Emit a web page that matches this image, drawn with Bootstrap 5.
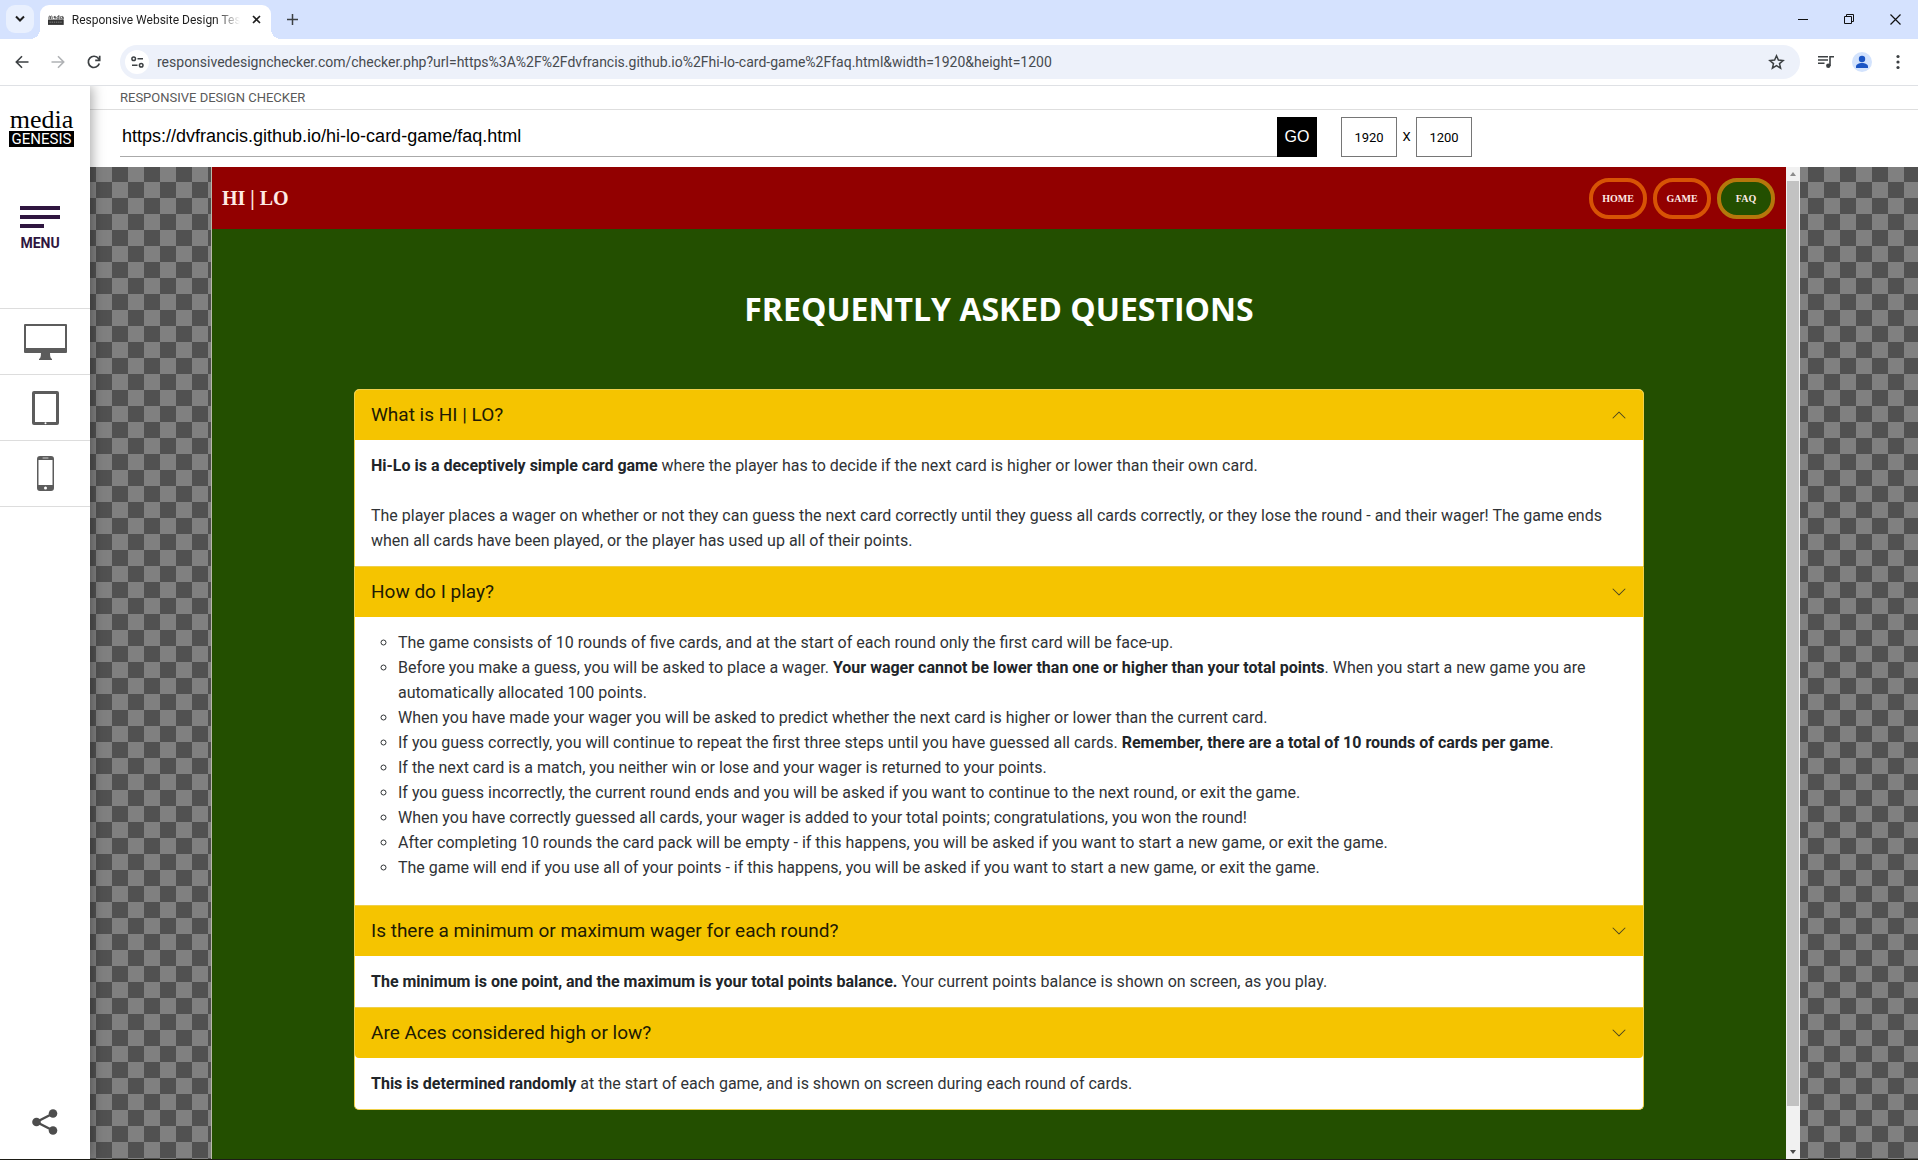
<!DOCTYPE html>
<html lang="en">
<head>
<meta charset="utf-8">
<meta name="viewport" content="width=device-width, initial-scale=1">
<title>Responsive Website Design Tester</title>
<link href="https://cdn.jsdelivr.net/npm/bootstrap@5.3.0/dist/css/bootstrap.min.css" rel="stylesheet">
<style>
body{font-family:Roboto,"Liberation Sans",sans-serif;font-size:16px;background:#fff;color:#212529}
button{font-family:inherit}
svg{display:block}
.shell{min-height:100vh;border-bottom:1px solid #1d1d16}
.ico{border:0;background:none;padding:0;color:#3c4043;display:flex;align-items:center;justify-content:center}

/* browser tab strip */
.strip{height:39px;background:#d5e2fe;padding:5px 0 0 6px}
.tabs-drop{width:28px;height:28px;border-radius:9px;background:#e9f0fe;color:#1f1f1f}
.page-tab{position:relative;width:231px;height:34px;margin-left:6px;padding:0 10px 5px 8px;background:#fff;border-radius:9px 9px 0 0;font-size:12px;color:#1f1f1f}
.page-tab::before,.page-tab::after{content:"";position:absolute;bottom:0;width:10px;height:10px}
.page-tab::before{left:-10px;background:radial-gradient(circle at 0 0,transparent 10px,#fff 10px)}
.page-tab::after{right:-10px;background:radial-gradient(circle at 100% 0,transparent 10px,#fff 10px)}
.tab-name{white-space:nowrap;overflow:hidden;-webkit-mask-image:linear-gradient(90deg,#000 145px,transparent 168px);mask-image:linear-gradient(90deg,#000 145px,transparent 168px)}
.win-btn{width:46px;height:28px;color:#111}

/* address bar */
.tools{height:47px;padding:0 2px 0 4px;border-bottom:1px solid #dfe1e5}
.nav-ico{width:36px;height:36px}
.omni{height:34px;margin-left:8px;padding:0 15px 0 5px;background:#edf1fa;border-radius:17px}
.site-info{width:24px;height:24px;border-radius:50%;background:#fff}
.omni input{border:0;background:none;outline:0;padding:0;margin-left:8px;font-size:14px;color:#474b50}

/* left rail */
.rail{position:relative;z-index:2;width:90px;background:#fff;box-shadow:2px 0 12px rgba(0,0,0,.35);clip-path:inset(0 -20px 0 0)}
.brand{width:65px;margin:22px 0 0 9px;color:#000;text-decoration:none;text-align:center}
.brand-top{display:block;font:26px/23px "Liberation Serif",serif}
.brand-low{display:block;background:#000;color:#fff;font-size:15px;line-height:16px}
.menu-btn{border:0;background:none;padding:0;margin:59px 0 0 20px;width:40px;color:#2f1640;font-weight:700;font-size:14px;line-height:16px}
.menu-btn span{display:block;margin-top:7px}
.devices{margin-top:57px}
.devices a{height:66px;border-top:1px solid #ddd;color:#5c5c5c;padding-left:1px}
.devices a:last-child{height:67px;border-bottom:1px solid #ddd}

/* checker form */
.site-name{height:24px;padding-left:30px;border-bottom:1px solid #dedede;font-size:13px;color:#5a5a5a}
.url-row{height:57px;padding:7px 0 10px 30px}
.url-box{flex:0 1 1157px;border:0;border-bottom:1px solid #aaa;padding:0 2px;font:18px "Liberation Sans",Arial,sans-serif;color:#000;outline:0;min-width:0}
.go{width:40px;border:0;background:#000;color:#fff;font:16px "Liberation Sans",Arial,sans-serif;padding:0}
.dim{width:56px;border:1px solid #767676;text-align:center;font-size:13px;color:#000;padding:0}
.times{width:19px;text-align:center;font-size:13px;color:#000}
.url-row .tall{height:40px}

/* preview */
.stage{padding:0 118px 0 121px;background:conic-gradient(#808080 25%,#515151 0 50%,#808080 0 75%,#515151 0) 6px 15px/32px 32px}
.frame{min-width:0;background:#234f00;border-left:1px solid #b9b9a9}
.game-nav{height:62px;background:#920000;padding:0 11px 0 10px}
.game-brand{font:700 20px "Liberation Serif",serif;color:#ffe9e4;text-decoration:none}
.pills{gap:6px}
.pill-link{width:58px;height:41px;border:4px solid #d75305;border-radius:20px;font:700 10px "Liberation Serif",serif;color:#ffe9e4;text-decoration:none}
.pill-link.on{background:#234f00;border-color:#b5770b}
.faq{padding:54px 142px 46px}
.faq h1{font:700 32px/52px "Open Sans","Noto Sans",sans-serif;color:#fff;margin:0 0 54px}
.accordion{--bs-accordion-border-color:#efd04a;--bs-accordion-border-radius:5px;--bs-accordion-inner-border-radius:4px;--bs-accordion-btn-padding-x:16px;--bs-accordion-btn-padding-y:0;--bs-accordion-body-padding-x:16px;--bs-accordion-body-padding-y:13px;--bs-accordion-btn-icon-width:16px;--bs-accordion-btn-bg:#f5c400;--bs-accordion-active-bg:#f5c400;--bs-accordion-btn-color:#211a04;--bs-accordion-active-color:#211a04;--bs-accordion-btn-active-icon:var(--bs-accordion-btn-icon)}
.accordion-button{height:50px;font-size:19px}
.accordion-button:not(.collapsed){box-shadow:none}
.accordion-button::after{opacity:.8}
.accordion-body{line-height:25px;color:#303336}
.accordion-body strong{color:#212529}
.accordion-body p{margin-bottom:25px}
.accordion-body p:last-child{margin:0}
.rules{list-style:circle;padding-left:27px;margin-bottom:12px}

.bar{width:14px;background:#f1f1f1;color:#8b8b8b}
.bar-thumb{flex:94 0 0;width:12px;background:#c2c2c2}
.bar-rest{flex:4 0 0}
.bar-end{height:14px;display:flex;align-items:center}
</style>
</head>
<body>
<div class="shell d-flex flex-column">

  <header>
    <div class="strip d-flex">
      <button class="ico tabs-drop" aria-label="Search tabs"><svg width="10" height="8" viewBox="0 0 10 8" fill="none" stroke="currentColor" stroke-width="2"><path d="M1 1.5l4 4 4-4"/></svg></button>
      <div class="page-tab d-flex align-items-center">
        <svg width="16" height="11" viewBox="0 0 16 11"><path d="M1 5V2.500q1-1 1.500 0V5m0-2.500q1.200-1 1.700 0V5M6 3.500h2Q7.500 1.500 6.200 2.500q-.7 1.500 1.600 2M11 1v4q-2 .4-2-1.200t2-1.300M12.500 2.200V5m1-2.500q2-.6 2 .6V5q-2 .2-1.800-.8t1.800-.6" fill="none" stroke="#555"/><path d="M0 5.500h16V11H0z" fill="#333"/><path d="M1.500 8.200h13" stroke="#888" stroke-dasharray="1.400 .8"/></svg>
        <span class="tab-name flex-grow-1 ms-2">Responsive Website Design Tester</span>
        <button class="ico" aria-label="Close tab"><svg width="9" height="9" viewBox="0 0 9 9" stroke="#1f1f1f" stroke-width="1.600"><path d="M1 1l7 7M8 1L1 8"/></svg></button>
      </div>
      <button class="ico ms-2 win-btn w-auto px-2" aria-label="New tab"><svg width="11" height="11" viewBox="0 0 11 11" stroke="#3c4043" stroke-width="1.500"><path d="M5.500 0v11M0 5.500h11"/></svg></button>
      <div class="d-flex ms-auto">
        <button class="ico win-btn" aria-label="Minimize"><svg width="10" height="10" viewBox="0 0 10 10" stroke="currentColor"><path d="M0 5.500h10"/></svg></button>
        <button class="ico win-btn" aria-label="Restore"><svg width="10" height="10" viewBox="0 0 10 10" fill="none" stroke="currentColor"><path d="M.5 2.500h7v7h-7zM2.500 2.500v-2h7v7h-2"/></svg></button>
        <button class="ico win-btn" aria-label="Close"><svg width="11" height="11" viewBox="0 0 11 11" stroke="currentColor" stroke-width="1.200"><path d="M.5 .5l10 10M10.500 .5l-10 10"/></svg></button>
      </div>
    </div>
    <div class="tools d-flex align-items-center">
      <button class="ico nav-ico" aria-label="Back"><svg width="14" height="14" viewBox="0 0 14 14" fill="none" stroke="currentColor" stroke-width="1.600"><path d="M13.500 7H1.500M7 1.200L1.300 7 7 12.800"/></svg></button>
      <button class="ico nav-ico" aria-label="Forward" disabled><svg width="14" height="14" viewBox="0 0 14 14" fill="none" stroke="#b0b2b5" stroke-width="1.600"><path d="M.5 7h12M7 1.200L12.700 7 7 12.800"/></svg></button>
      <button class="ico nav-ico" aria-label="Reload"><svg width="14" height="14" viewBox="0 0 14 14" fill="none" stroke="currentColor" stroke-width="1.700"><path d="M12.300 8.500A5.600 5.600 0 1 1 11.500 3.600L12.500 5"/><path d="M12.700 .8v4.500H8.200"/></svg></button>
      <div class="omni d-flex align-items-center flex-grow-1">
        <button class="ico site-info" aria-label="Site information"><svg width="13" height="12" viewBox="0 0 13 12" fill="none" stroke="currentColor" stroke-width="1.500"><circle cx="2.700" cy="2.700" r="1.800"/><path d="M6.500 2.700H12M1 9.300h5.500"/><circle cx="10.200" cy="9.300" r="1.800"/></svg></button>
        <input class="flex-grow-1" type="text" aria-label="Address" value="responsivedesignchecker.com/checker.php?url=https%3A%2F%2Fdvfrancis.github.io%2Fhi-lo-card-game%2Ffaq.html&amp;width=1920&amp;height=1200">
        <button class="ico" aria-label="Bookmark this page"><svg width="17" height="16" viewBox="0 0 17 16" fill="none" stroke="currentColor" stroke-width="1.500"><path d="M8.500 1.800l1.900 4.300 4.700.4-3.600 3.100 1.100 4.600-4.100-2.500-4.100 2.500 1.100-4.600L1.900 6.500l4.700-.4z"/></svg></button>
      </div>
      <button class="ico ms-2 nav-ico" aria-label="Media control"><svg width="16" height="14" viewBox="0 0 16 14" fill="none" stroke="currentColor" stroke-width="1.600"><path d="M0 1.800h10M0 5h10M0 8.200h6.500M12 11V1.800h4"/><circle cx="10.300" cy="10.800" r="2.200" fill="currentColor" stroke="none"/></svg></button>
      <button class="ico nav-ico" aria-label="Profile"><svg width="20" height="20" viewBox="0 0 20 20"><circle cx="10" cy="10" r="10" fill="#d3e3fd"/><circle cx="10" cy="7" r="3.200" fill="#1b55c4"/><path d="M4 16v-1.500c0-2.300 3-3.500 6-3.500s6 1.200 6 3.500V16z" fill="#1b55c4"/></svg></button>
      <button class="ico nav-ico" aria-label="More"><svg width="4" height="16" viewBox="0 0 4 16" fill="currentColor"><circle cx="2" cy="2.500" r="1.600"/><circle cx="2" cy="8" r="1.600"/><circle cx="2" cy="13.500" r="1.600"/></svg></button>
    </div>
  </header>

  <div class="d-flex flex-grow-1">
    <aside class="rail d-flex flex-column flex-shrink-0">
      <a class="brand" href="#"><span class="brand-top">media</span><span class="brand-low">GENESIS</span></a>
      <button class="menu-btn"><svg width="40" height="22" viewBox="0 0 40 22" fill="currentColor"><path d="M0 0h40v4H0zM0 9h40v4H0zM0 18h24v4H0z"/></svg><span>MENU</span></button>
      <nav class="devices">
        <a class="d-flex align-items-center justify-content-center" href="#" aria-label="Desktop"><svg width="43" height="36" viewBox="0 0 43 36" fill="currentColor"><path fill-rule="evenodd" d="M1 0h41q1 0 1 1v27q0 1-1 1H1q-1 0-1-1V1q0-1 1-1zM2 2v22h39V2z"/><path d="M17 29h9q0 4 .8 5l1.200 1v1H15v-1l1.200-1q.8-1 .8-5z"/></svg></a>
        <a class="d-flex align-items-center justify-content-center" href="#" aria-label="Tablet"><svg width="27" height="34" viewBox="0 0 27 34" fill="currentColor"><path fill-rule="evenodd" d="M2 0h23q2 0 2 2v30q0 2-2 2H2q-2 0-2-2V2q0-2 2-2zM3 3v28h21V3z"/><circle cx="13.500" cy="32.300" r="1" fill="#fff"/></svg></a>
        <a class="d-flex align-items-center justify-content-center" href="#" aria-label="Phone"><svg width="17" height="35" viewBox="0 0 17 35" fill="currentColor"><path fill-rule="evenodd" d="M3 0h11q3 0 3 3v29q0 3-3 3H3q-3 0-3-3V3q0-3 3-3zM1.500 4v25h14V4z"/><path d="M6 2h5" stroke="#ccc" stroke-linecap="round"/><circle cx="8.500" cy="32" r="1.500" fill="#fff"/></svg></a>
      </nav>
      <a class="mt-auto mx-auto pb-4" href="#" aria-label="Share"><svg width="26" height="26" viewBox="0 0 26 26" fill="#4d4d4d"><path d="M21 4.500L4.500 13 21 21.500" fill="none" stroke="#4d4d4d" stroke-width="2.400"/><circle cx="21" cy="4.500" r="4.300"/><circle cx="4.500" cy="13" r="4.300"/><circle cx="21" cy="21.500" r="4.300"/></svg></a>
    </aside>

    <main class="d-flex flex-column flex-grow-1">
      <div class="site-name d-flex align-items-center">RESPONSIVE DESIGN CHECKER</div>
      <form class="url-row d-flex align-items-center" onsubmit="return false">
        <input class="url-box tall" type="text" aria-label="Website address" value="https://dvfrancis.github.io/hi-lo-card-game/faq.html">
        <button class="go tall">GO</button>
        <input class="dim tall ms-4" type="text" aria-label="Width" value="1920">
        <span class="times">X</span>
        <input class="dim tall" type="text" aria-label="Height" value="1200">
      </form>
      <div class="stage d-flex flex-grow-1">
        <section class="frame flex-grow-1">
          <nav class="game-nav d-flex align-items-center justify-content-between">
            <a class="game-brand" href="#">HI | LO</a>
            <div class="pills d-flex">
              <a class="pill-link d-flex align-items-center justify-content-center" href="#">HOME</a>
              <a class="pill-link d-flex align-items-center justify-content-center" href="#">GAME</a>
              <a class="pill-link on d-flex align-items-center justify-content-center" href="#">FAQ</a>
            </div>
          </nav>
          <div class="faq">
            <h1 class="text-center">FREQUENTLY ASKED QUESTIONS</h1>
            <div class="accordion">
              <div class="accordion-item">
                <h2 class="accordion-header"><button class="accordion-button" data-bs-toggle="collapse" data-bs-target="#q1">What is HI | LO?</button></h2>
                <div id="q1" class="accordion-collapse collapse show"><div class="accordion-body">
                  <p><strong>Hi-Lo is a deceptively simple card game</strong> where the player has to decide if the next card is higher or lower than their own card.</p>
                  <p>The player places a wager on whether or not they can guess the next card correctly until they guess all cards correctly, or they lose the round - and their wager! The game ends when all cards have been played, or the player has used up all of their points.</p>
                </div></div>
              </div>
              <div class="accordion-item">
                <h2 class="accordion-header"><button class="accordion-button collapsed" data-bs-toggle="collapse" data-bs-target="#q2">How do I play?</button></h2>
                <div id="q2" class="accordion-collapse collapse show"><div class="accordion-body">
                  <ul class="rules">
                    <li>The game consists of 10 rounds of five cards, and at the start of each round only the first card will be face-up.</li>
                    <li>Before you make a guess, you will be asked to place a wager. <strong>Your wager cannot be lower than one or higher than your total points</strong>. When you start a new game you are automatically allocated 100 points.</li>
                    <li>When you have made your wager you will be asked to predict whether the next card is higher or lower than the current card.</li>
                    <li>If you guess correctly, you will continue to repeat the first three steps until you have guessed all cards. <strong>Remember, there are a total of 10 rounds of cards per game</strong>.</li>
                    <li>If the next card is a match, you neither win or lose and your wager is returned to your points.</li>
                    <li>If you guess incorrectly, the current round ends and you will be asked if you want to continue to the next round, or exit the game.</li>
                    <li>When you have correctly guessed all cards, your wager is added to your total points; congratulations, you won the round!</li>
                    <li>After completing 10 rounds the card pack will be empty - if this happens, you will be asked if you want to start a new game, or exit the game.</li>
                    <li>The game will end if you use all of your points - if this happens, you will be asked if you want to start a new game, or exit the game.</li>
                  </ul>
                </div></div>
              </div>
              <div class="accordion-item">
                <h2 class="accordion-header"><button class="accordion-button collapsed" data-bs-toggle="collapse" data-bs-target="#q3">Is there a minimum or maximum wager for each round?</button></h2>
                <div id="q3" class="accordion-collapse collapse show"><div class="accordion-body"><strong>The minimum is one point, and the maximum is your total points balance.</strong> Your current points balance is shown on screen, as you play.</div></div>
              </div>
              <div class="accordion-item">
                <h2 class="accordion-header"><button class="accordion-button collapsed" data-bs-toggle="collapse" data-bs-target="#q4">Are Aces considered high or low?</button></h2>
                <div id="q4" class="accordion-collapse collapse show"><div class="accordion-body"><strong>This is determined randomly</strong> at the start of each game, and is shown on screen during each round of cards.</div></div>
              </div>
            </div>
          </div>
        </section>
        <div class="bar d-flex flex-column flex-shrink-0 align-items-center">
          <span class="bar-end"><svg width="6" height="4" viewBox="0 0 6 4" fill="currentColor"><path d="M0 4l3-4 3 4z"/></svg></span>
          <span class="bar-thumb"></span>
          <span class="bar-rest"></span>
          <span class="bar-end"><svg width="6" height="4" viewBox="0 0 6 4" fill="#4a4a4a"><path d="M0 0l3 4 3-4z"/></svg></span>
        </div>
      </div>
    </main>
  </div>
</div>
<script src="https://cdn.jsdelivr.net/npm/bootstrap@5.3.0/dist/js/bootstrap.bundle.min.js"></script>
</body>
</html>
